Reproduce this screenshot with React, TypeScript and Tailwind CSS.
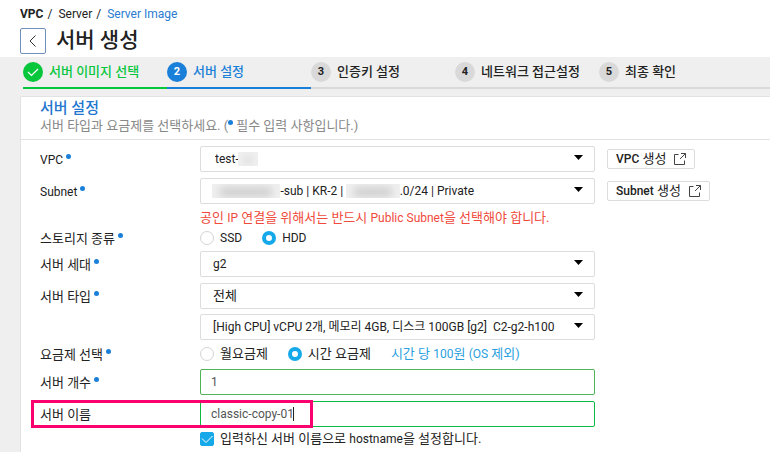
import { useState, type ReactNode } from "react";

const latin = "text-xs";

function Latin({ children }: { children: ReactNode }) {
  return <span className={latin}>{children}</span>;
}

function RequiredDot() {
  return <span aria-hidden="true" className="mb-2 inline-block size-[5px] shrink-0 rounded-full bg-[#1a7fd8]" />;
}

type StepState = "done" | "current" | "todo";

const steps: { label: string; state: StepState }[] = [
  { label: "서버 이미지 선택", state: "done" },
  { label: "서버 설정", state: "current" },
  { label: "인증키 설정", state: "todo" },
  { label: "네트워크 접근설정", state: "todo" },
  { label: "최종 확인", state: "todo" },
];

const stepLine: Record<StepState, string> = {
  done: "border-[#06c73c] text-[#06c73c]",
  current: "border-[#1a7fd8] text-[#1a7fd8]",
  todo: "border-[#d9d9d9] text-[#222]",
};

const stepCircle: Record<StepState, string> = {
  done: "bg-[#06c73c] text-white",
  current: "bg-[#1a7fd8] text-white",
  todo: "bg-[#d9d9d9] text-[#222]",
};

function Steps() {
  return (
    <ol className="flex pl-[23px]">
      {steps.map((step, index) => (
        <li
          key={step.label}
          aria-current={step.state === "current" ? "step" : undefined}
          className={`flex h-8 w-36 shrink-0 items-center gap-1.5 border-b-2 font-medium whitespace-nowrap last:w-auto last:flex-1 ${stepLine[step.state]}`}
        >
          <span
            className={`flex size-5 items-center justify-center rounded-full text-[11px] font-bold ${stepCircle[step.state]}`}
          >
            {step.state === "done" ? (
              <svg viewBox="0 0 20 20" className="size-5" fill="none" stroke="currentColor" strokeWidth="1.2">
                <path d="M5 10l3.5 3.5L15 7" />
              </svg>
            ) : (
              index + 1
            )}
          </span>
          {step.label}
        </li>
      ))}
    </ol>
  );
}

function Row({
  label,
  htmlFor,
  required = true,
  className = "py-[3px]",
  children,
}: {
  label?: ReactNode;
  htmlFor?: string;
  required?: boolean;
  className?: string;
  children: ReactNode;
}) {
  return (
    <div className={`relative flex items-center ${className}`}>
      <div className="flex w-40 shrink-0 items-center gap-[3px] pt-0.5">
        {label && (htmlFor ? <label htmlFor={htmlFor}>{label}</label> : <span>{label}</span>)}
        {label && required && <RequiredDot />}
      </div>
      {children}
    </div>
  );
}

function Select({
  id,
  options,
  ariaLabel,
  className = "pl-3",
  children,
}: {
  id: string;
  options: string[];
  ariaLabel?: string;
  className?: string;
  children?: ReactNode;
}) {
  return (
    <div className="relative max-w-[395px] flex-1">
      <select
        id={id}
        aria-label={ariaLabel}
        className={`block h-[26px] w-full appearance-none rounded-xs border border-[#dcdcdc] bg-white pr-7 text-[#222] ${className}`}
      >
        {options.map((option) => (
          <option key={option}>{option}</option>
        ))}
      </select>
      {children}
      <svg
        viewBox="0 0 9 5"
        className="pointer-events-none absolute top-[9px] right-3 h-[5px] w-[9px]"
        fill="#000"
        aria-hidden="true"
      >
        <path d="M0 0h9L4.5 5z" />
      </svg>
    </div>
  );
}

function Masked({ className }: { className: string }) {
  return (
    <span className={`pointer-events-none absolute top-1.5 h-3.5 overflow-hidden bg-[#f0f0f0] ${className}`}>
      <span className="mx-2 mt-1 block h-2 bg-[#c8c8c8] blur-xs" />
    </span>
  );
}

function LinkButton({ name }: { name: string }) {
  return (
    <button
      type="button"
      className="ml-3 flex h-5 shrink-0 items-center gap-2 rounded-xs border border-[#dcdcdc] bg-white px-2 whitespace-nowrap text-[#222]"
    >
      <span>
        <span className="text-xs font-medium">{name}</span> 생성
      </span>
      <svg viewBox="0 0 12 12" className="size-3" fill="none" stroke="#444" aria-hidden="true">
        <path d="M4.5 1.5h-4v10h10v-4M7 .5h4.5V5M11.5.5L6 6" />
      </svg>
    </button>
  );
}

function Radio({
  name,
  checked,
  onChange,
  children,
}: {
  name: string;
  checked: boolean;
  onChange: () => void;
  children: ReactNode;
}) {
  return (
    <label className="mr-5 flex items-center gap-1.5 whitespace-nowrap">
      <input
        type="radio"
        name={name}
        checked={checked}
        onChange={onChange}
        className="size-3.5 appearance-none rounded-full border border-[#d4d4d4] bg-white checked:border-4 checked:border-[#16a9ea]"
      />
      {children}
    </label>
  );
}

const nb = "\u00a0";

export default function App() {
  const [storage, setStorage] = useState("HDD");
  const [plan, setPlan] = useState("hour");

  return (
    <div className="flex min-h-screen flex-col overflow-x-hidden bg-[#efefef] font-['Roboto','Noto_Sans_CJK_KR',sans-serif] text-[13px] leading-5 text-[#222]">
      <header className="bg-white px-5 pt-1 pb-[3px]">
        <nav aria-label="breadcrumb" className="mb-1 flex text-xs leading-5">
          <span className="font-bold">VPC</span>
          <span className="pr-1.5 pl-1">/</span>
          <a href="#server" className="text-[#222]">
            Server
          </a>
          <span className="pr-1.5 pl-1">/</span>
          <a href="#image" className="text-[#2b7bd0]">
            Server Image
          </a>
        </nav>
        <div className="flex items-center gap-2.5">
          <button
            type="button"
            aria-label="뒤로"
            className="flex size-[26px] items-center justify-center rounded-xs border border-[#6f8fbd] bg-white"
          >
            <svg viewBox="0 0 8 12" className="h-3 w-2" fill="none" stroke="#333">
              <path d="M6.5.5L1 6l5.5 5.5" />
            </svg>
          </button>
          <h1 className="pb-0.5 text-[21px] leading-6 font-medium">서버 생성</h1>
        </div>
      </header>

      <Steps />

      <main className="mt-[7px] ml-5 flex-1 rounded-tl-xs border-t border-l border-[#e2e2e2] bg-white">
        <div className="border-b border-[#e2e2e2] pt-0.5 pb-1 pl-[19px]">
          <h2 className="text-[15px] leading-[18px] font-medium text-[#1f77cf]">서버 설정</h2>
          <p className="flex items-center leading-[18px] text-[#888]">
            서버 타입과 요금제를 선택하세요. (<RequiredDot />
            <span className="pl-[3px]">필수 입력 사항입니다.)</span>
          </p>
        </div>

        <form className="pt-[3px] pr-5 pl-[19px]">
          <Row label={<Latin>VPC</Latin>} htmlFor="vpc">
            <Select id="vpc" options={["test-"]} className="pl-3.5 text-xs">
              <Masked className="left-[38px] w-5" />
            </Select>
            <LinkButton name="VPC" />
          </Row>
          <Row label={<Latin>Subnet</Latin>} htmlFor="subnet">
            <Select
              id="subnet"
              options={[`${nb.repeat(22)}-sub | KR-2 | ${nb.repeat(18)}.0/24 | Private`]}
              className="pl-3.5 text-xs"
            >
              <Masked className="left-3 w-[68px]" />
              <Masked className="left-[146px] w-[54px]" />
            </Select>
            <LinkButton name="Subnet" />
          </Row>
          <Row className="h-[21px]">
            <p className="text-[#f04a3c]">
              공인 <Latin>IP</Latin> 연결을 위해서는 반드시 <Latin>Public Subnet</Latin>을 선택해야 합니다.
            </p>
          </Row>
          <Row label="스토리지 종류" className="h-5">
            <Radio name="storage" checked={storage === "SSD"} onChange={() => setStorage("SSD")}>
              <Latin>SSD</Latin>
            </Radio>
            <Radio name="storage" checked={storage === "HDD"} onChange={() => setStorage("HDD")}>
              <Latin>HDD</Latin>
            </Radio>
          </Row>
          <Row label="서버 세대" htmlFor="generation">
            <Select id="generation" options={["g2"]} className="pl-3 text-xs" />
          </Row>
          <Row label="서버 타입" htmlFor="type">
            <Select id="type" options={["전체"]} />
          </Row>
          <Row className="py-0.5">
            <Select
              id="spec"
              ariaLabel="서버 사양"
              options={[`[High CPU] vCPU 2개, 메모리 4GB, 디스크 100GB [g2]${nb}${nb}C2-g2-h100`]}
              className="pl-3 text-xs"
            />
          </Row>
          <Row label="요금제 선택" className="h-6">
            <Radio name="plan" checked={plan === "month"} onChange={() => setPlan("month")}>
              월요금제
            </Radio>
            <Radio name="plan" checked={plan === "hour"} onChange={() => setPlan("hour")}>
              시간 요금제
            </Radio>
            <span className="whitespace-nowrap text-[#2a9fe0]">
              시간 당 <Latin>100</Latin>원 <Latin>(OS</Latin> 제외)
            </span>
          </Row>
          <Row label="서버 개수" htmlFor="count">
            <input
              id="count"
              defaultValue="1"
              className="h-[26px] max-w-[395px] flex-1 rounded-xs border border-[#4db556] bg-white pr-3 pl-2.5 text-xs text-[#555] outline-none"
            />
          </Row>
          <Row label="서버 이름" htmlFor="name" required={false}>
            <div className="relative max-w-[395px] flex-1">
              <input
                id="name"
                defaultValue="classic-copy-01"
                className="block h-[26px] w-full rounded-xs border border-[#0dbb41] bg-white pr-3 pl-2.5 text-xs text-[#555] outline-none"
              />
              <span aria-hidden="true" className="absolute top-1.5 left-[93px] h-3.5 w-px bg-[#222]" />
            </div>
            <span
              aria-hidden="true"
              className="pointer-events-none absolute top-0.5 -left-[9px] h-7 w-[282px] border-3 border-[#fb0070]"
            />
          </Row>
          <Row className="h-[18px]">
            <label className="flex items-center gap-1.5 whitespace-nowrap">
              <span className="relative flex size-3.5">
                <input
                  type="checkbox"
                  defaultChecked
                  className="peer size-3.5 appearance-none rounded-xs border border-[#d4d4d4] bg-white checked:border-[#16a9ea] checked:bg-[#16a9ea]"
                />
                <svg
                  viewBox="0 0 14 14"
                  className="pointer-events-none absolute inset-0 hidden size-3.5 peer-checked:block"
                  fill="none"
                  stroke="#fff"
                >
                  <path d="M2 6.5l4 4L12.5 4" />
                </svg>
              </span>
              <span>
                입력하신 서버 이름으로 <Latin>hostname</Latin>을 설정합니다.
              </span>
            </label>
          </Row>
        </form>
      </main>
    </div>
  );
}
